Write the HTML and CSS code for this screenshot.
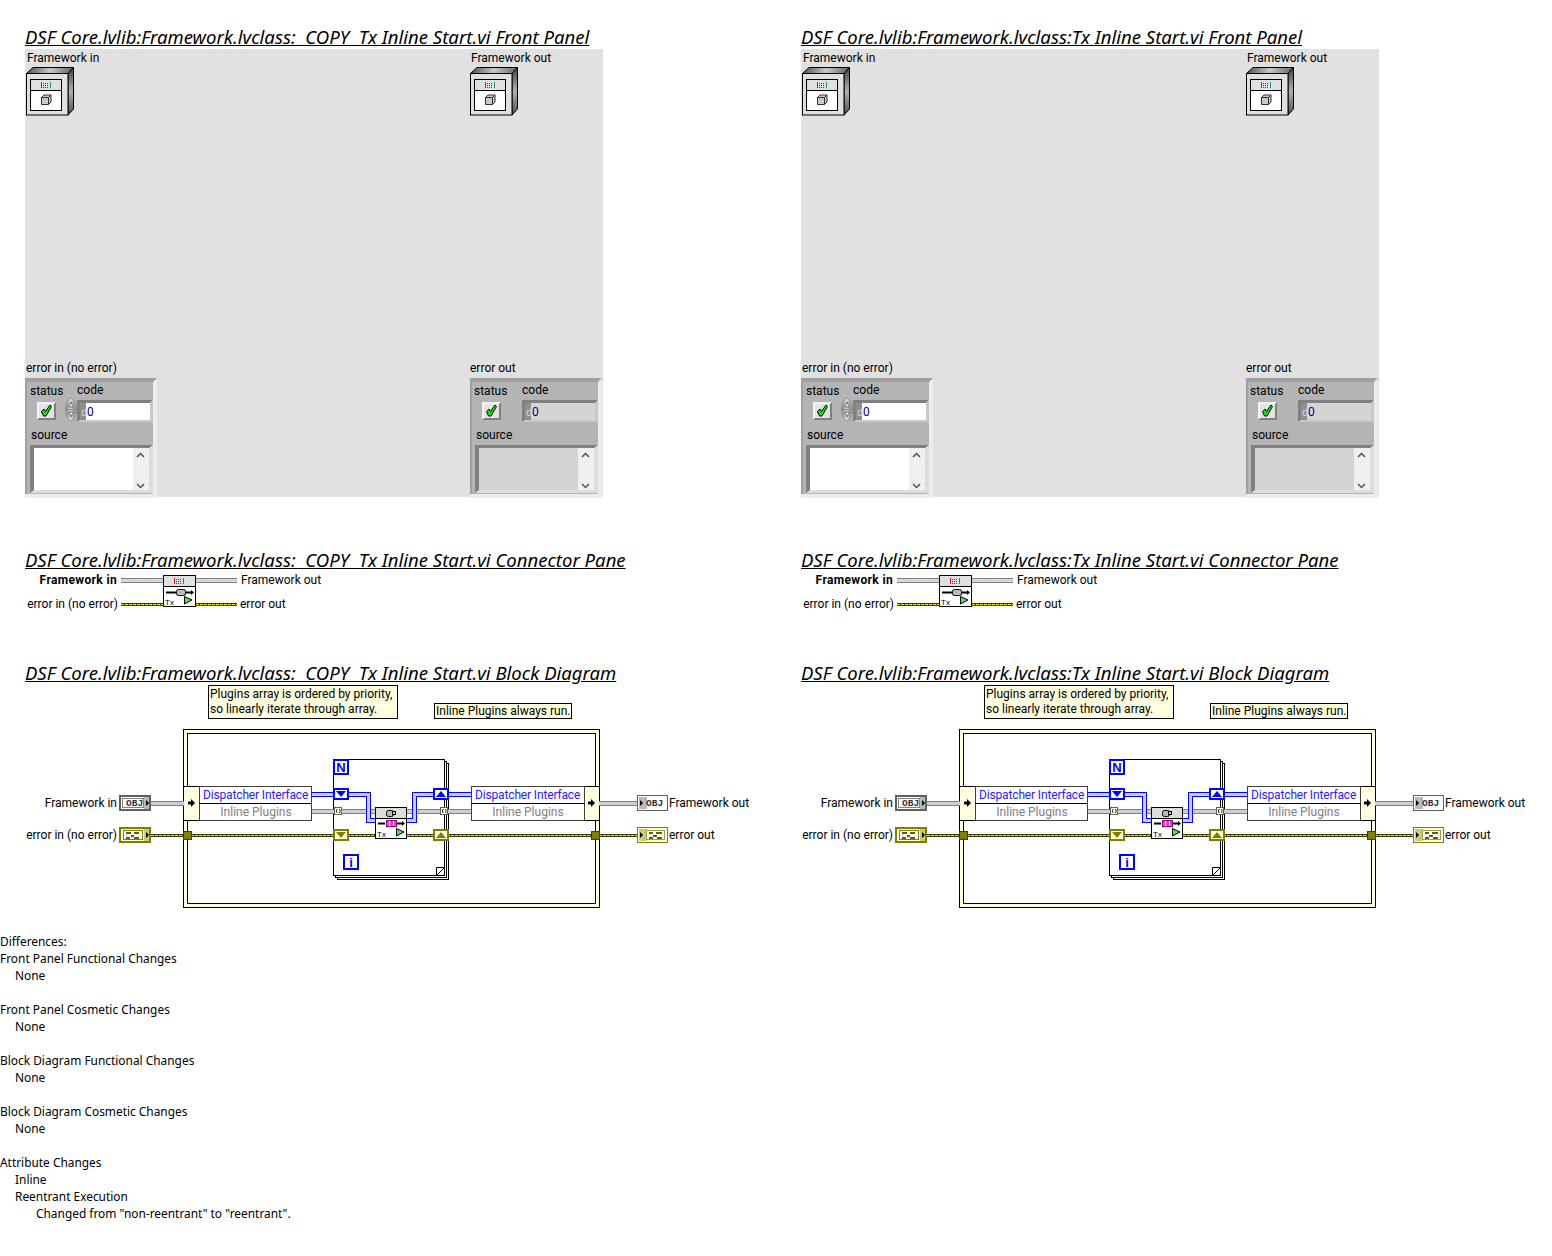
FILE: index.html
```html
<!DOCTYPE html>
<html lang="en">
<head>
<meta charset="utf-8">
<title>VI Comparison Report</title>
<link rel="stylesheet" href="styles.css">
</head>
<body>
<svg class="defs" width="0" height="0" aria-hidden="true">
  <defs>
    <linearGradient id="topface" x1="0" x2="1" y1="0" y2="0"><stop offset="0" stop-color="#505050"/><stop offset="0.5" stop-color="#c8c8c8"/><stop offset="1" stop-color="#606060"/></linearGradient>
    <linearGradient id="sideface" x1="0" x2="0" y1="0" y2="1"><stop offset="0" stop-color="#404040"/><stop offset="0.5" stop-color="#b0b0b0"/><stop offset="1" stop-color="#505050"/></linearGradient>
    <linearGradient id="spinface" x1="0" x2="1" y1="0" y2="0"><stop offset="0" stop-color="#808080"/><stop offset="0.45" stop-color="#d8d8d8"/><stop offset="1" stop-color="#808080"/></linearGradient>

    <!-- class control icon, 48x48 -->
    <g id="fp-class">
      <path d="M.5 6.5 7 .5H47.500L42 6.5Z" fill="url(#topface)" stroke="#000"/>
      <path d="M42 6.5 47.500 .5V42L42 48Z" fill="url(#sideface)" stroke="#000"/>
      <rect x=".5" y="6.5" width="41.500" height="41.500" fill="#e0e0e0" stroke="#000"/>
      <rect x="4.500" y="12.500" width="31" height="31" fill="#fff" stroke="#000"/>
      <rect x="5" y="13" width="30" height="10" fill="#e0e0e0"/>
      <path d="M5 23.500H35" stroke="#000" fill="none"/>
      <path d="M15.500 15v6" stroke="#d01818"/><path d="M24.500 15v6" stroke="#109090"/>
      <path d="M17 16.500h6M17 18.500h6M17 20.500h6" stroke="#404040" stroke-dasharray="1 1"/>
      <path d="M15.500 30.500 18 28H25V35L22.500 37.500H15.500Z" fill="#c8c8c8" stroke="#303030"/>
      <path d="M15.500 30.500H22.500V37.500M22.500 30.500 25 28" fill="none" stroke="#303030"/>
    </g>

    <!-- error cluster shell, 132x120 -->
    <g id="cluster-shell">
      <rect width="132" height="120" fill="#ececec"/>
      <path d="M0 0H132L128 4V116H0Z" fill="#a0a0a0"/>
      <rect x="2" y="4" width="126" height="112" fill="#b4b4b4"/>
      <rect x="12" y="24" width="19" height="18" fill="#e4e4e4"/>
      <path d="M12 24H31L29 26H14V40L12 42Z" fill="#f4f4f4"/>
      <path d="M31 24V42H12L14 40H29V26Z" fill="#808080"/>
      <path d="M16.500 33.500 19 31 20.500 33.500 25 27 26.500 28.500 21 38H18.500Z" fill="#18e018" stroke="#000" stroke-width="1"/>
    </g>

    <!-- source string box with scroll arrows -->
    <g id="source-box">
      <rect x="5" y="67" width="123" height="48" fill="#dcdcdc"/>
      <path d="M5 67H128L124 70H9V112L5 115Z" fill="#808080"/>
      <rect x="108" y="70" width="16" height="42" fill="#f0f0f0"/>
      <path d="M112 79 115.500 75.500 119 79M112 106 115.500 109.500 119 106" fill="none" stroke="#505050" stroke-width="1.500"/>
    </g>

    <g id="numeric-well">
      <path d="M0 0H76L73 3H9V20H3L0 22Z" fill="#808080"/>
      <path d="M76 0V22H0L3 20H73V3Z" fill="#c8c8c8"/>
      <rect x="3" y="3" width="6" height="17" fill="#909090"/>
    </g>

    <g id="spinner">
      <ellipse cx="6" cy="11.500" rx="5.500" ry="11.500" fill="url(#spinface)" stroke="#989898"/>
      <path d="M.5 11.500H11.500" stroke="#888"/>
      <path d="M3.500 9 6 4 8.500 9ZM3.500 14 6 19 8.500 14Z" fill="#e4e4e4" stroke="#707070"/>
    </g>

    <!-- subVI as shown in the connector pane -->
    <g id="vi-pane">
      <rect x=".5" y=".5" width="32" height="31" fill="#fff" stroke="#000"/>
      <rect x="1" y="1" width="31" height="10" fill="#e0e0e0"/>
      <path d="M1 11.500H32" stroke="#000"/>
      <path d="M11.500 3v6" stroke="#d01818"/><path d="M20.500 3v6" stroke="#109090"/>
      <path d="M13 4.500h6M13 6.500h6M13 8.500h6" stroke="#404040" stroke-dasharray="1 1"/>
      <path d="M3 17.500H13M22 17.500H28" stroke="#000" stroke-width="2"/>
      <path d="M28 15 31 17.500 28 20Z"/>
      <rect x="13.500" y="14.500" width="9" height="6" rx="2" fill="#bbb" stroke="#000"/>
      <path d="M21.500 21.500V29L29 25Z" fill="#50e050" stroke="#000"/>
    </g>

    <!-- subVI as shown in the block diagram -->
    <g id="vi-diagram">
      <rect x=".5" y=".5" width="31" height="31" fill="#fff" stroke="#000"/>
      <rect x="1" y="1" width="30" height="10" fill="#dcdcdc"/>
      <path d="M1 11.500H31" stroke="#000"/>
      <rect x="11.500" y="3.500" width="7" height="6" rx="2" fill="#bbb" stroke="#000"/>
      <rect x="17.500" y="4.500" width="3" height="3" fill="#e0e040" stroke="#000"/>
      <path d="M3 16.500H10M22 16.500H27" stroke="#000" stroke-width="2"/>
      <path d="M27 14 30 16.500 27 19Z"/>
      <rect x="11.500" y="13.500" width="10" height="6" fill="#f040d0" stroke="#800070"/>
      <path d="M14.500 14v5M18.500 14v5" stroke="#fff"/>
      <path d="M21.500 21.500V29L29 25Z" fill="#50e050" stroke="#000"/>
    </g>

    <!-- all block diagram graphics -->
    <g id="bd-graphics">
      <rect x="183.500" y="729.500" width="416" height="178" fill="#ffffe0" stroke="#000"/>
      <rect x="187.500" y="733.500" width="408" height="170" fill="#fff" stroke="#000"/>

      <!-- for loop stack -->
      <rect x="337.500" y="763.500" width="111" height="116" fill="#fff" stroke="#000"/>
      <rect x="335.500" y="761.500" width="111" height="116" fill="#fff" stroke="#000"/>
      <rect x="333.500" y="759.500" width="111" height="116" fill="#fff" stroke="#000"/>
      <path d="M444.500 867.500 436.500 875.500V867.500Z" fill="#fff" stroke="#000"/>

      <!-- wires -->
      <path class="wg1" d="M119 803.500H184M599 803.500H637M311 811.500H335M341 811.500H375M407 811.500H441M447 811.500H471"/>
      <path class="wg2" d="M119 803.500H184M599 803.500H637M311 811.500H335M341 811.500H375M407 811.500H441M447 811.500H471"/>
      <path class="wb1" d="M311 794.500H368.500V820.500H375M407 820.500H414.500V794.500H471"/>
      <path class="wb2" d="M311 794.500H368.500V820.500H375M407 820.500H414.500V794.500H471"/>
      <path class="we1" d="M151 835.500H637"/>
      <path class="we2" d="M151 835.500H637"/>

      <!-- left frame node -->
      <rect x="184" y="786" width="15" height="35" fill="#ffffe0"/>
      <path d="M184 786.500H199M184 820.500H199" stroke="#000"/>
      <rect x="199.500" y="786.500" width="112" height="34" fill="#fff" stroke="#404040"/>
      <path d="M199 803.500H311" stroke="#000"/>
      <path d="M188 801.500H191V799L195 803 191 807V804.500H188Z"/>

      <!-- right frame node -->
      <rect x="584" y="786" width="15" height="35" fill="#ffffe0"/>
      <path d="M584 786.500H599M584 820.500H599" stroke="#000"/>
      <rect x="471.500" y="786.500" width="113" height="34" fill="#fff" stroke="#404040"/>
      <path d="M471 803.500H584" stroke="#000"/>
      <path d="M588 801.500H591V799L595 803 591 807V804.500H588Z"/>

      <!-- frame error tunnels -->
      <rect x="183.500" y="831.500" width="8" height="8" fill="#808000" stroke="#404000"/>
      <rect x="591.500" y="831.500" width="8" height="8" fill="#808000" stroke="#404000"/>

      <!-- loop terminals -->
      <rect x="334" y="760" width="14" height="14" fill="#ffffe0" stroke="#0000ff" stroke-width="2"/>
      <rect x="344" y="855" width="14" height="14" fill="#ffffe0" stroke="#0000ff" stroke-width="2"/>

      <!-- shift registers -->
      <rect x="334" y="789" width="14" height="10" fill="#ffffe0" stroke="#0000ff" stroke-width="2"/>
      <path d="M336 791H346L341 797Z" fill="#0000ff"/>
      <rect x="434" y="789" width="14" height="10" fill="#ffffe0" stroke="#0000ff" stroke-width="2"/>
      <path d="M436 797H446L441 791Z" fill="#0000ff"/>
      <rect x="334" y="830" width="14" height="10" fill="#ffffe0" stroke="#808000" stroke-width="2"/>
      <path d="M336 832H346L341 838Z" fill="#808000"/>
      <rect x="434" y="830" width="14" height="10" fill="#ffffe0" stroke="#808000" stroke-width="2"/>
      <path d="M436 838H446L441 832Z" fill="#808000"/>

      <!-- array tunnels -->
      <rect x="334.500" y="807.500" width="7" height="7" fill="#ffffe0" stroke="#606060"/>
      <path d="M337.500 809.500h-1v3h1M339 809.500h1v3h-1" fill="none" stroke="#404040"/>
      <rect x="440.500" y="807.500" width="7" height="7" fill="#ffffe0" stroke="#606060"/>
      <path d="M443.500 809.500h-1v3h1M445 809.500h1v3h-1" fill="none" stroke="#404040"/>

      <use href="#vi-diagram" x="375" y="807"/>

      <!-- framework in terminal -->
      <rect x="120" y="796" width="30" height="14" fill="#fff" stroke="#606060" stroke-width="2"/>
      <rect x="144" y="797" width="5" height="12" fill="#b8b8b8"/>
      <path d="M146 800 149 803 146 806Z"/>
      <rect x="122.500" y="798.500" width="21" height="9" fill="#fff" stroke="#808080"/>
      <!-- framework out terminal -->
      <rect x="637.500" y="795.500" width="30" height="15" fill="#fff" stroke="#606060"/>
      <rect x="639" y="797" width="8" height="12" fill="#b8b8b8"/>
      <path d="M640 800 643 803 640 806Z"/>
      <!-- error in terminal -->
      <rect x="120" y="828" width="30" height="14" fill="#ffffe0" stroke="#808000" stroke-width="2"/>
      <rect x="144" y="829" width="5" height="12" fill="#c8c880"/>
      <path d="M146 832 149 835 146 838Z"/>
      <rect x="123.500" y="830.500" width="19" height="9" fill="#fff" stroke="#808000"/>
      <path d="M126 833h5M134 833h5M131 836h3M126 838h4M134 838h5" stroke="#606000" stroke-width="2"/>
      <!-- error out terminal -->
      <rect x="637.500" y="827.500" width="30" height="15" fill="#ffffe0" stroke="#808000"/>
      <rect x="639" y="829" width="8" height="12" fill="#c8c880"/>
      <path d="M640 832 643 835 640 838Z"/>
      <rect x="646.500" y="830.500" width="18" height="9" fill="#fff" stroke="#a0a040"/>
      <path d="M649 833h4M656 833h6M653 836h4M649 838h4M657 838h5" stroke="#606000" stroke-width="2"/>

      <!-- free labels -->
      <rect x="208.500" y="685.500" width="189" height="33" fill="#ffffe0" stroke="#000"/>
      <rect x="434.500" y="703.500" width="137" height="15" fill="#ffffe0" stroke="#000"/>
    </g>

    <!-- connector pane wires -->
    <g id="pane-wires">
      <path class="wg1" d="M121 580.500H163M196 580.500H237"/>
      <path class="wg3" d="M121 580.500H163M196 580.500H237"/>
      <path class="we1" d="M121 604.500H163M196 604.500H237"/>
      <path class="we2" d="M121 604.500H163M196 604.500H237"/>
    </g>

    <!-- error in / error out clusters -->
    <g id="err-in">
      <use href="#cluster-shell" x="25" y="378"/>
      <use href="#spinner" x="65" y="398"/>
      <use href="#numeric-well" x="77" y="400"/>
      <rect x="86" y="403" width="64" height="17" fill="#fff"/>
      <use href="#source-box" x="25" y="378"/>
      <rect x="34" y="448" width="99" height="42" fill="#fff"/>
    </g>
    <g id="err-out">
      <use href="#cluster-shell" x="470" y="378"/>
      <use href="#numeric-well" x="522" y="400"/>
      <rect x="531" y="403" width="64" height="17" fill="#d4d4d4"/>
      <use href="#source-box" x="470" y="378"/>
      <rect x="479" y="448" width="99" height="42" fill="#d4d4d4"/>
    </g>
  </defs>
</svg>

<main class="compare">
  <section class="vi">
    <h2 class="vi-title">DSF Core.lvlib:Framework.lvclass:  COPY  Tx Inline Start.vi Front Panel</h2>
    <svg class="front-panel" width="578" height="448" viewBox="25 49 578 448">
      <use href="#fp-class" x="26" y="67"/>
      <use href="#fp-class" x="470" y="67"/>
      <use href="#err-in"/>
      <use href="#err-out"/>
      <text class="t" x="27" y="62">Framework in</text>
      <text class="t" x="471" y="62">Framework out</text>
      <text class="t" x="26" y="372">error in (no error)</text>
      <text class="t" x="470" y="372">error out</text>
      <text class="t" x="30" y="395">status</text>
      <text class="t" x="77" y="394">code</text>
      <text class="t" x="31" y="439">source</text>
      <text class="d" x="81" y="416">d</text>
      <text class="val" x="87" y="416">0</text>
      <text class="t" x="474" y="395">status</text>
      <text class="t" x="522" y="394">code</text>
      <text class="t" x="476" y="439">source</text>
      <text class="d" x="526" y="416">d</text>
      <text class="val" x="532" y="416">0</text>
    </svg>

    <h2 class="vi-title pane-title">DSF Core.lvlib:Framework.lvclass:  COPY  Tx Inline Start.vi Connector Pane</h2>
    <svg class="pane" width="776" height="44" viewBox="25 572 776 44">
      <use href="#pane-wires"/>
      <use href="#vi-pane" x="163" y="575"/>
      <text class="mini" x="165" y="605">Tx</text>
      <text class="t b end" x="117" y="584">Framework in</text>
      <text class="t end" x="118" y="608">error in (no error)</text>
      <text class="t" x="241" y="584">Framework out</text>
      <text class="t" x="240" y="608">error out</text>
    </svg>

    <h2 class="vi-title diagram-title">DSF Core.lvlib:Framework.lvclass:  COPY  Tx Inline Start.vi Block Diagram</h2>
    <svg class="diagram" width="776" height="228" viewBox="25 685 776 228">
      <use href="#bd-graphics"/>
      <text class="t" x="210" y="698">Plugins array is ordered by priority,</text>
      <text class="t" x="210" y="713">so linearly iterate through array.</text>
      <text class="t" x="436" y="715">Inline Plugins always run.</text>
      <text class="t end" x="117" y="807">Framework in</text>
      <text class="t end" x="117" y="839">error in (no error)</text>
      <text class="t" x="669" y="807">Framework out</text>
      <text class="t" x="669" y="839">error out</text>
      <text class="t blue" x="203" y="799">Dispatcher Interface</text>
      <text class="t grey mid" x="256" y="816">Inline Plugins</text>
      <text class="t blue" x="475" y="799">Dispatcher Interface</text>
      <text class="t grey mid" x="528" y="816">Inline Plugins</text>
      <text class="term" x="341" y="772">N</text>
      <text class="term" x="351" y="867">i</text>
      <text class="mini" x="377" y="837">Tx</text>
      <text class="obj" x="126" y="806">OBJ</text>
      <text class="obj" x="646" y="806">OBJ</text>
    </svg>
  </section>

  <section class="vi">
    <h2 class="vi-title">DSF Core.lvlib:Framework.lvclass:Tx Inline Start.vi Front Panel</h2>
    <svg class="front-panel" width="578" height="448" viewBox="25 49 578 448">
      <use href="#fp-class" x="26" y="67"/>
      <use href="#fp-class" x="470" y="67"/>
      <use href="#err-in"/>
      <use href="#err-out"/>
      <text class="t" x="27" y="62">Framework in</text>
      <text class="t" x="471" y="62">Framework out</text>
      <text class="t" x="26" y="372">error in (no error)</text>
      <text class="t" x="470" y="372">error out</text>
      <text class="t" x="30" y="395">status</text>
      <text class="t" x="77" y="394">code</text>
      <text class="t" x="31" y="439">source</text>
      <text class="d" x="81" y="416">d</text>
      <text class="val" x="87" y="416">0</text>
      <text class="t" x="474" y="395">status</text>
      <text class="t" x="522" y="394">code</text>
      <text class="t" x="476" y="439">source</text>
      <text class="d" x="526" y="416">d</text>
      <text class="val" x="532" y="416">0</text>
    </svg>

    <h2 class="vi-title pane-title">DSF Core.lvlib:Framework.lvclass:Tx Inline Start.vi Connector Pane</h2>
    <svg class="pane" width="776" height="44" viewBox="25 572 776 44">
      <use href="#pane-wires"/>
      <use href="#vi-pane" x="163" y="575"/>
      <text class="mini" x="165" y="605">Tx</text>
      <text class="t b end" x="117" y="584">Framework in</text>
      <text class="t end" x="118" y="608">error in (no error)</text>
      <text class="t" x="241" y="584">Framework out</text>
      <text class="t" x="240" y="608">error out</text>
    </svg>

    <h2 class="vi-title diagram-title">DSF Core.lvlib:Framework.lvclass:Tx Inline Start.vi Block Diagram</h2>
    <svg class="diagram" width="776" height="228" viewBox="25 685 776 228">
      <use href="#bd-graphics"/>
      <text class="t" x="210" y="698">Plugins array is ordered by priority,</text>
      <text class="t" x="210" y="713">so linearly iterate through array.</text>
      <text class="t" x="436" y="715">Inline Plugins always run.</text>
      <text class="t end" x="117" y="807">Framework in</text>
      <text class="t end" x="117" y="839">error in (no error)</text>
      <text class="t" x="669" y="807">Framework out</text>
      <text class="t" x="669" y="839">error out</text>
      <text class="t blue" x="203" y="799">Dispatcher Interface</text>
      <text class="t grey mid" x="256" y="816">Inline Plugins</text>
      <text class="t blue" x="475" y="799">Dispatcher Interface</text>
      <text class="t grey mid" x="528" y="816">Inline Plugins</text>
      <text class="term" x="341" y="772">N</text>
      <text class="term" x="351" y="867">i</text>
      <text class="mini" x="377" y="837">Tx</text>
      <text class="obj" x="126" y="806">OBJ</text>
      <text class="obj" x="646" y="806">OBJ</text>
    </svg>
  </section>
</main>

<section class="differences">
<p>Differences:</p>
<p>Front Panel Functional Changes</p>
<p class="i1">None</p>
<p class="gap">Front Panel Cosmetic Changes</p>
<p class="i1">None</p>
<p class="gap">Block Diagram Functional Changes</p>
<p class="i1">None</p>
<p class="gap">Block Diagram Cosmetic Changes</p>
<p class="i1">None</p>
<p class="gap">Attribute Changes</p>
<p class="i1">Inline</p>
<p class="i1">Reentrant Execution</p>
<p class="i2">Changed from "non-reentrant" to "reentrant".</p>
</section>
</body>
</html>
```

FILE: styles.css
```css
html, body {
  margin: 0;
  padding: 0;
  background: #fff;
  color: #000;
  font-family: "Noto Sans", "Liberation Sans", sans-serif;
  font-size: 12px;
}

.defs {
  position: absolute;
  width: 0;
  height: 0;
}

.compare {
  display: grid;
  grid-template-columns: 776px 751px;
  padding: 26px 0 0 25px;
}

.vi-title {
  margin: 0;
  height: 23px;
  font-family: "Noto Sans", "Open Sans", sans-serif;
  font-size: 18.55px;
  line-height: 21px;
  font-weight: 400;
  font-style: italic;
  text-decoration: underline;
  white-space: pre;
}

.pane-title { margin-top: 52px; }
.diagram-title { margin-top: 46px; }

.front-panel, .pane, .diagram {
  display: block;
  overflow: visible;
}

.front-panel { background: #e1e1e1; }

.t {
  font-family: Roboto, "Liberation Sans", sans-serif;
  font-size: 12px;
  fill: #000;
}
.b { font-weight: 700; letter-spacing: 0.35px; }
.end { text-anchor: end; }
.mid { text-anchor: middle; }
.blue { fill: #2a1aff; letter-spacing: -0.15px; }
.grey { fill: #808080; }
.d {
  font-family: Roboto, sans-serif;
  font-size: 11px;
  fill: #d4d4d4;
}
.val {
  font-family: Roboto, sans-serif;
  font-size: 12px;
  fill: #00008c;
}
.mini {
  font-family: "Liberation Sans", sans-serif;
  font-size: 8px;
  fill: #000;
}
.term {
  font-family: "Liberation Sans", sans-serif;
  font-size: 13px;
  font-weight: 700;
  fill: #0000ff;
  text-anchor: middle;
}
.obj {
  font-family: "Liberation Mono", monospace;
  font-size: 9.5px;
  font-weight: 700;
  fill: #303030;
}

.wg1, .wg2, .wg3, .wb1, .wb2, .we1, .we2 {
  fill: none;
  shape-rendering: crispEdges;
}
.wg1 { stroke: #808080; stroke-width: 5; }
.wg2 { stroke: #cfcfcf; stroke-width: 3; }
.wg3 { stroke: #d8d8d8; stroke-width: 3; }
.wb1 { stroke: #0000ff; stroke-width: 5; }
.wb2 { stroke: #c8cce8; stroke-width: 3; }
.we1 { stroke: #3c3c00; stroke-width: 3; }
.we2 { stroke: #ecec00; stroke-width: 1; stroke-dasharray: 3 1; }

.differences {
  margin-top: 20px;
  line-height: 17px;
  font-size: 11.9px;
}
.differences p { margin: 0; white-space: pre; }
.differences .i1 { padding-left: 15px; }
.differences .i2 { padding-left: 36px; }
.differences .gap { margin-top: 17px; }
```
